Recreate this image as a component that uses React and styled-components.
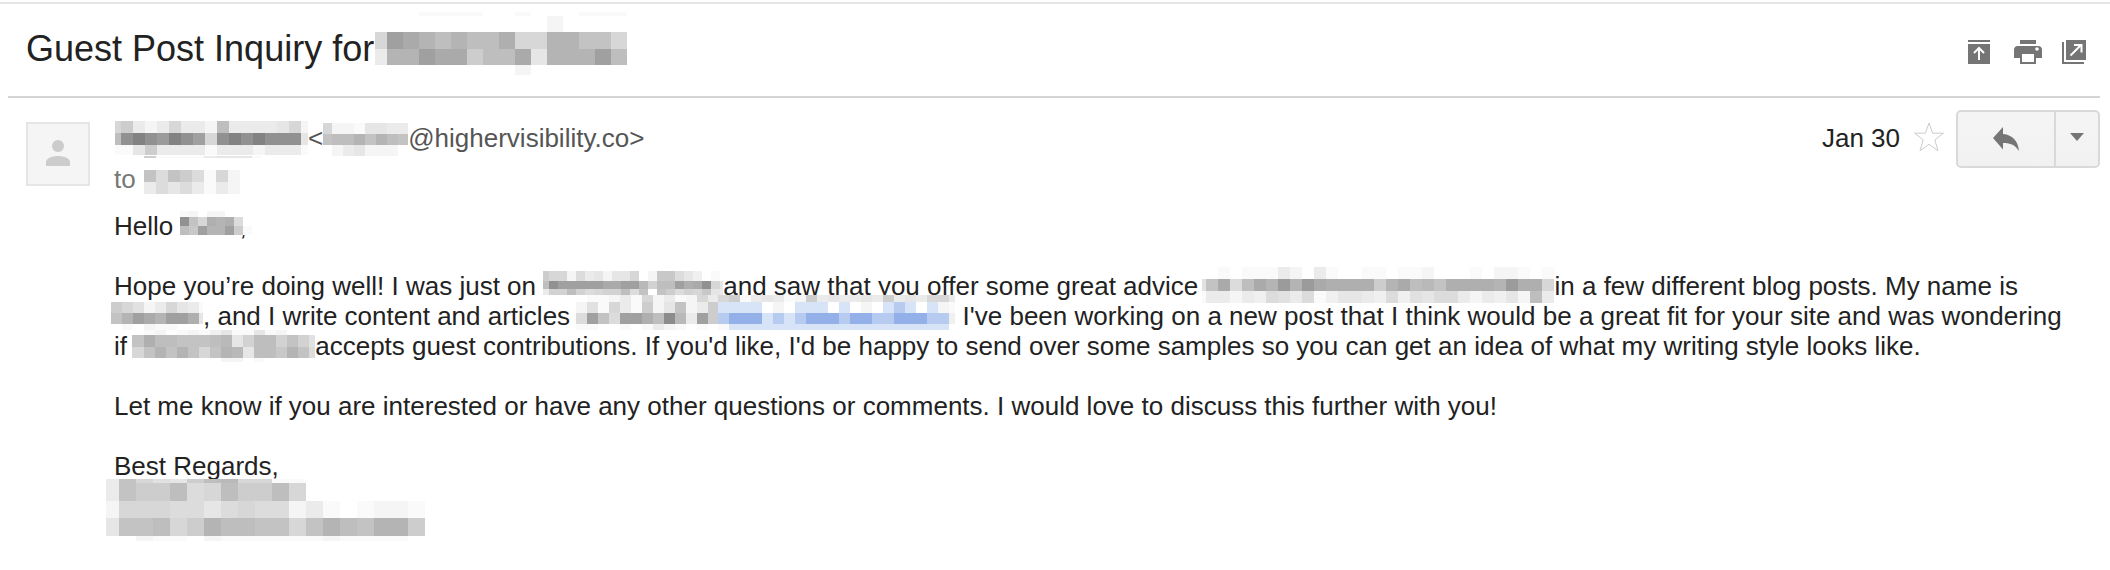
import React from 'react';
import styled, { createGlobalStyle } from 'styled-components';

const GlobalStyle = createGlobalStyle`
  body {
    margin: 0;
    background-color: #ffffff;
    color: #222222;
    font-family: 'Liberation Sans', Arial, sans-serif;
    font-size: 26px;
    line-height: 30px;
  }
`;

// Styled components
const Page = styled.main`
  margin-top: 2px;
  padding: 0 10px 0 8px;
  border-top: 2px solid #e5e5e5;
`;

const SubjectBar = styled.header`
  display: flex;
  justify-content: space-between;
  align-items: center;
  padding: 24px 10px 26px 18px;
  border-bottom: 2px solid #d5d5d5;
`;

const Subject = styled.h1`
  margin: 0;
  font-size: 36px;
  font-weight: normal;
  line-height: 42px;
`;

const Toolbar = styled.div`
  display: flex;
  gap: 16px;
  padding-top: 6px;
`;

const IconButton = styled.button`
  display: flex;
  padding: 0;
  border: none;
  background: none;
  color: #757575;
  cursor: pointer;
`;

const Message = styled.article`
  display: flex;
  gap: 24px;
  padding: 12px 0 0 18px;
`;

const Avatar = styled.div`
  display: flex;
  flex-shrink: 0;
  width: 60px;
  height: 60px;
  margin-top: 12px;
  border: 2px solid #e5e5e5;
  background-color: #f5f5f5;
`;

const Content = styled.div`
  flex: 1;
  min-width: 0;
`;

const MessageHeader = styled.div`
  display: flex;
  justify-content: space-between;
  align-items: flex-start;
`;

const Sender = styled.div`
  padding-top: 13px;
  color: #555555;
`;

const Recipient = styled.div`
  margin-top: 11px;
  color: #777777;
`;

const Actions = styled.div`
  display: flex;
  gap: 12px;
`;

const SentDate = styled.time`
  padding-top: 13px;
`;

const StarButton = styled(IconButton)`
  align-self: flex-start;
  padding-top: 10px;
`;

const ReplyGroup = styled.div`
  display: flex;
  height: 54px;
  border: 2px solid #d9d9d9;
  border-radius: 5px;
  background: linear-gradient(#f5f5f5, #f1f1f1);
`;

const ReplyButton = styled(IconButton)`
  align-items: center;
  justify-content: center;
  width: ${props => (props.$narrow ? '44px' : '96px')};
  border-left: ${props => (props.$narrow ? '2px solid #d9d9d9' : 'none')};
`;

const Body = styled.div`
  margin-top: 17px;
  padding-right: 28px;
`;

const Paragraph = styled.p`
  margin: 0 0 ${props => (props.$tight ? '0' : '30px')};
`;

const Link = styled.a`
  color: #1155cc;
  text-decoration: none;
`;

const MosaicSvg = styled.svg`
  position: relative;
  vertical-align: top;
  overflow: visible;
`;

// Every cell is a base 36 darkness, A to C are the link blues
const blues = { A: '#d7e4f7', B: '#b7caf0', C: '#93b1e8' };

const cellColor = (code) => {
  if (blues[code]) return blues[code];
  const level = 255 - parseInt(code, 36) * 5;
  return `rgb(${level}, ${level}, ${level})`;
};

const Mosaic = ({ width, height = 30, x = 0, y, end = width, lead, cell, rows }) => {
  let top = y;
  return (
    <MosaicSvg width={width} height={height} shapeRendering="crispEdges" aria-hidden="true">
      {rows.map(([rowHeight, codes], row) => {
        const rowTop = top;
        top += rowHeight;
        return codes.split('').map((code, col) => {
          if (code === '0') return null;
          const left = col === 0 ? x : x + lead + (col - 1) * cell;
          const size = col === 0 ? lead : cell;
          return (
            <rect
              key={`${row}-${col}`}
              x={left}
              y={rowTop}
              width={Math.min(size, end - left)}
              height={rowHeight}
              fill={cellColor(code)}
            />
          );
        });
      })}
    </MosaicSvg>
  );
};

const mosaics = {
  subject: {
    width: 254, height: 42, x: 1, y: -16, lead: 12, cell: 16,
    rows: [
      [4, '0001111001000111'],
      [16, '0000000000020000'],
      [17, '8jhfdfddg88ffcc8'],
      [16, '4ffjhhaddh5fffjd'],
      [10, '0000000002000000'],
    ],
  },
  sender: {
    width: 194, x: 1, y: -2, lead: 6, cell: 12,
    rows: [
      [12, '8a4248442d4444582'],
      [12, 'dmpmkpmj8mpmpmmm5'],
      [10, '115a4444144424441'],
    ],
  },
  address: {
    width: 85, y: 0, lead: 9, cell: 11,
    rows: [[11, '82215544'], [11, 'cddfcfdc'], [11, '02452220']],
  },
  recipient: {
    width: 119, x: 1, y: -8, lead: 12, cell: 12,
    rows: [[2, 'a111145551'], [12, '0'], [12, 'c7ca7182'], [12, '47574142']],
  },
  greeting: {
    width: 59, y: 0, end: 72, lead: 9, cell: 9,
    rows: [[6, '1202200'], [9, 'mc8gfg7'], [9, 'dbjffja1']],
  },
  site: {
    width: 180, y: 0, lead: 6, cell: 9,
    rows: [
      [10, 'a882745255802bb753010'],
      [8, 'dmjjjjjhhjje9ddjghm85'],
      [6, '499d97899d7c0ca798b54'],
    ],
  },
  topic: {
    width: 349, x: -3, y: -4, lead: 4, cell: 12,
    rows: [
      [12, '001011142041001101120001022101'],
      [12, '6ch7dhfkfkhggggafhdecggggfkgg8'],
      [12, '1442437647135543736577424352d4'],
    ],
  },
  name: {
    width: 89, x: -3, y: 1, lead: 11, cell: 11,
    rows: [[11, 'a86248541'], [11, 'cfjhfjjg5'], [6, '010211000']],
  },
  company: {
    width: 142, x: -1, y: -6, lead: 11, cell: 11,
    rows: [
      [7, '0112418241284'],
      [11, '261841a25c24a'],
      [11, '7jc7jjgdne4ja'],
      [6, '1100101421010'],
    ],
  },
  companyLink: {
    width: 236, x: -1, y: -6, lead: 11, cell: 11,
    rows: [
      [7, '8a145412a454454a454884'],
      [11, 'AAAA020AAA0A020ABA0A21'],
      [11, 'BCCCABABCCCBCCBBCCCBB3'],
      [6, '1AAAAAAAAAAAAAAAAAAAA0'],
    ],
  },
  siteAgain: {
    width: 181, x: -2, y: -1, lead: 12, cell: 11,
    rows: [
      [5, '01201213511512000'],
      [12, 'cgddcccde59dd9c96'],
      [11, '8cfcfc8cfe5ddbfc7'],
      [4, '00000000220100000'],
    ],
  },
  signature: {
    width: 311, height: 60, x: -8, y: -2, lead: 13, cell: 17,
    rows: [
      [4, '4c865ade88110000000'],
      [18, '4caad78daad80000000'],
      [17, '2888775787724101221'],
      [18, '5ccd8afddcc8cfdcffa'],
      [15, '0021102111111211110'],
    ],
  },
};

const ArchiveIcon = () => (
  <svg width="32" height="24" fill="currentColor" aria-hidden="true">
    <path d="M6 0h22v2H6zM6 4h22v20H6z" />
    <path d="M17 20V8.500M12 13l5-5 5 5" fill="none" stroke="#ffffff" strokeWidth="2" />
  </svg>
);

const PrintIcon = () => (
  <svg width="32" height="24" fill="currentColor" aria-hidden="true">
    <path d="M10 0h16v4H10z" />
    <path d="M8 6h20a4 4 0 0 1 4 4v8h-6v6H10v-6H4v-8a4 4 0 0 1 4-4z" />
    <path d="M12 14h12v8H12z" fill="#ffffff" />
    <circle cx="27" cy="9" r="1.800" fill="#ffffff" />
  </svg>
);

const PopOutIcon = () => (
  <svg width="32" height="24" fill="currentColor" aria-hidden="true">
    <path d="M8 0h20v20H8zM4 2h2v20h20v2H4z" />
    <path d="M12.500 15.500L23 5M16 5h7.500v7.500" fill="none" stroke="#ffffff" strokeWidth="2" />
  </svg>
);

const StarIcon = () => (
  <svg width="32" height="32" aria-hidden="true">
    <path
      d="M17 3l3.600 10.200H31.500l-8.700 6.700 3.200 10.800-9-6.400-9 6.400 3.200-10.800-8.700-6.700h10.900z"
      fill="none"
      stroke="#cccccc"
    />
  </svg>
);

const ReplyIcon = () => (
  <svg width="26" height="24" fill="currentColor" aria-hidden="true">
    <path d="M10 0v7c10 1 15 7 16 17-4-6-8-8-16-8v6.500L0 11z" />
  </svg>
);

const CaretIcon = () => (
  <svg width="14" height="12" fill="currentColor" aria-hidden="true">
    <path d="M0 0h14L7 8z" />
  </svg>
);

const PersonIcon = () => (
  <svg width="60" height="60" fill="#cccccc" aria-hidden="true">
    <circle cx="30" cy="22" r="6" />
    <path d="M18 42v-4c0-4 7-6 12-6s12 2 12 6v4z" />
  </svg>
);

const App = () => {
  return (
    <>
      <GlobalStyle />
      <Page>
        <SubjectBar>
          <Subject>
            Guest Post Inquiry for
            <Mosaic {...mosaics.subject} />
          </Subject>
          <Toolbar>
            <IconButton type="button" aria-label="Archive"><ArchiveIcon /></IconButton>
            <IconButton type="button" aria-label="Print"><PrintIcon /></IconButton>
            <IconButton type="button" aria-label="Open in new window"><PopOutIcon /></IconButton>
          </Toolbar>
        </SubjectBar>
        <Message>
          <Avatar><PersonIcon /></Avatar>
          <Content>
            <MessageHeader>
              <Sender>
                <Mosaic {...mosaics.sender} />
                &lt;
                <Mosaic {...mosaics.address} />
                @highervisibility.co&gt;
                <Recipient>
                  to <Mosaic {...mosaics.recipient} />
                </Recipient>
              </Sender>
              <Actions>
                <SentDate>Jan 30</SentDate>
                <StarButton type="button" aria-label="Star"><StarIcon /></StarButton>
                <ReplyGroup>
                  <ReplyButton type="button" aria-label="Reply"><ReplyIcon /></ReplyButton>
                  <ReplyButton type="button" aria-label="More" $narrow><CaretIcon /></ReplyButton>
                </ReplyGroup>
              </Actions>
            </MessageHeader>
            <Body>
              <Paragraph>
                Hello <Mosaic {...mosaics.greeting} />,
              </Paragraph>
              <Paragraph>
                Hope you’re doing well! I was just on <Mosaic {...mosaics.site} />
                and saw that you offer some great advice <Mosaic {...mosaics.topic} />
                in a few different blog posts. My name is <Mosaic {...mosaics.name} />
                , and I write content and articles <Mosaic {...mosaics.company} />
                <Link href="#company" aria-label="Company">
                  <Mosaic {...mosaics.companyLink} />
                </Link>
                {' '}I've been working on a new post that I think would be a great fit for your site
                and was wondering if <Mosaic {...mosaics.siteAgain} />
                accepts guest contributions. If you'd like, I'd be happy to send over some samples so
                you can get an idea of what my writing style looks like.
              </Paragraph>
              <Paragraph>
                Let me know if you are interested or have any other questions or comments. I would
                love to discuss this further with you!
              </Paragraph>
              <Paragraph $tight>Best Regards,</Paragraph>
              <Paragraph $tight>
                <Mosaic {...mosaics.signature} />
              </Paragraph>
            </Body>
          </Content>
        </Message>
      </Page>
    </>
  );
};

export default App;
